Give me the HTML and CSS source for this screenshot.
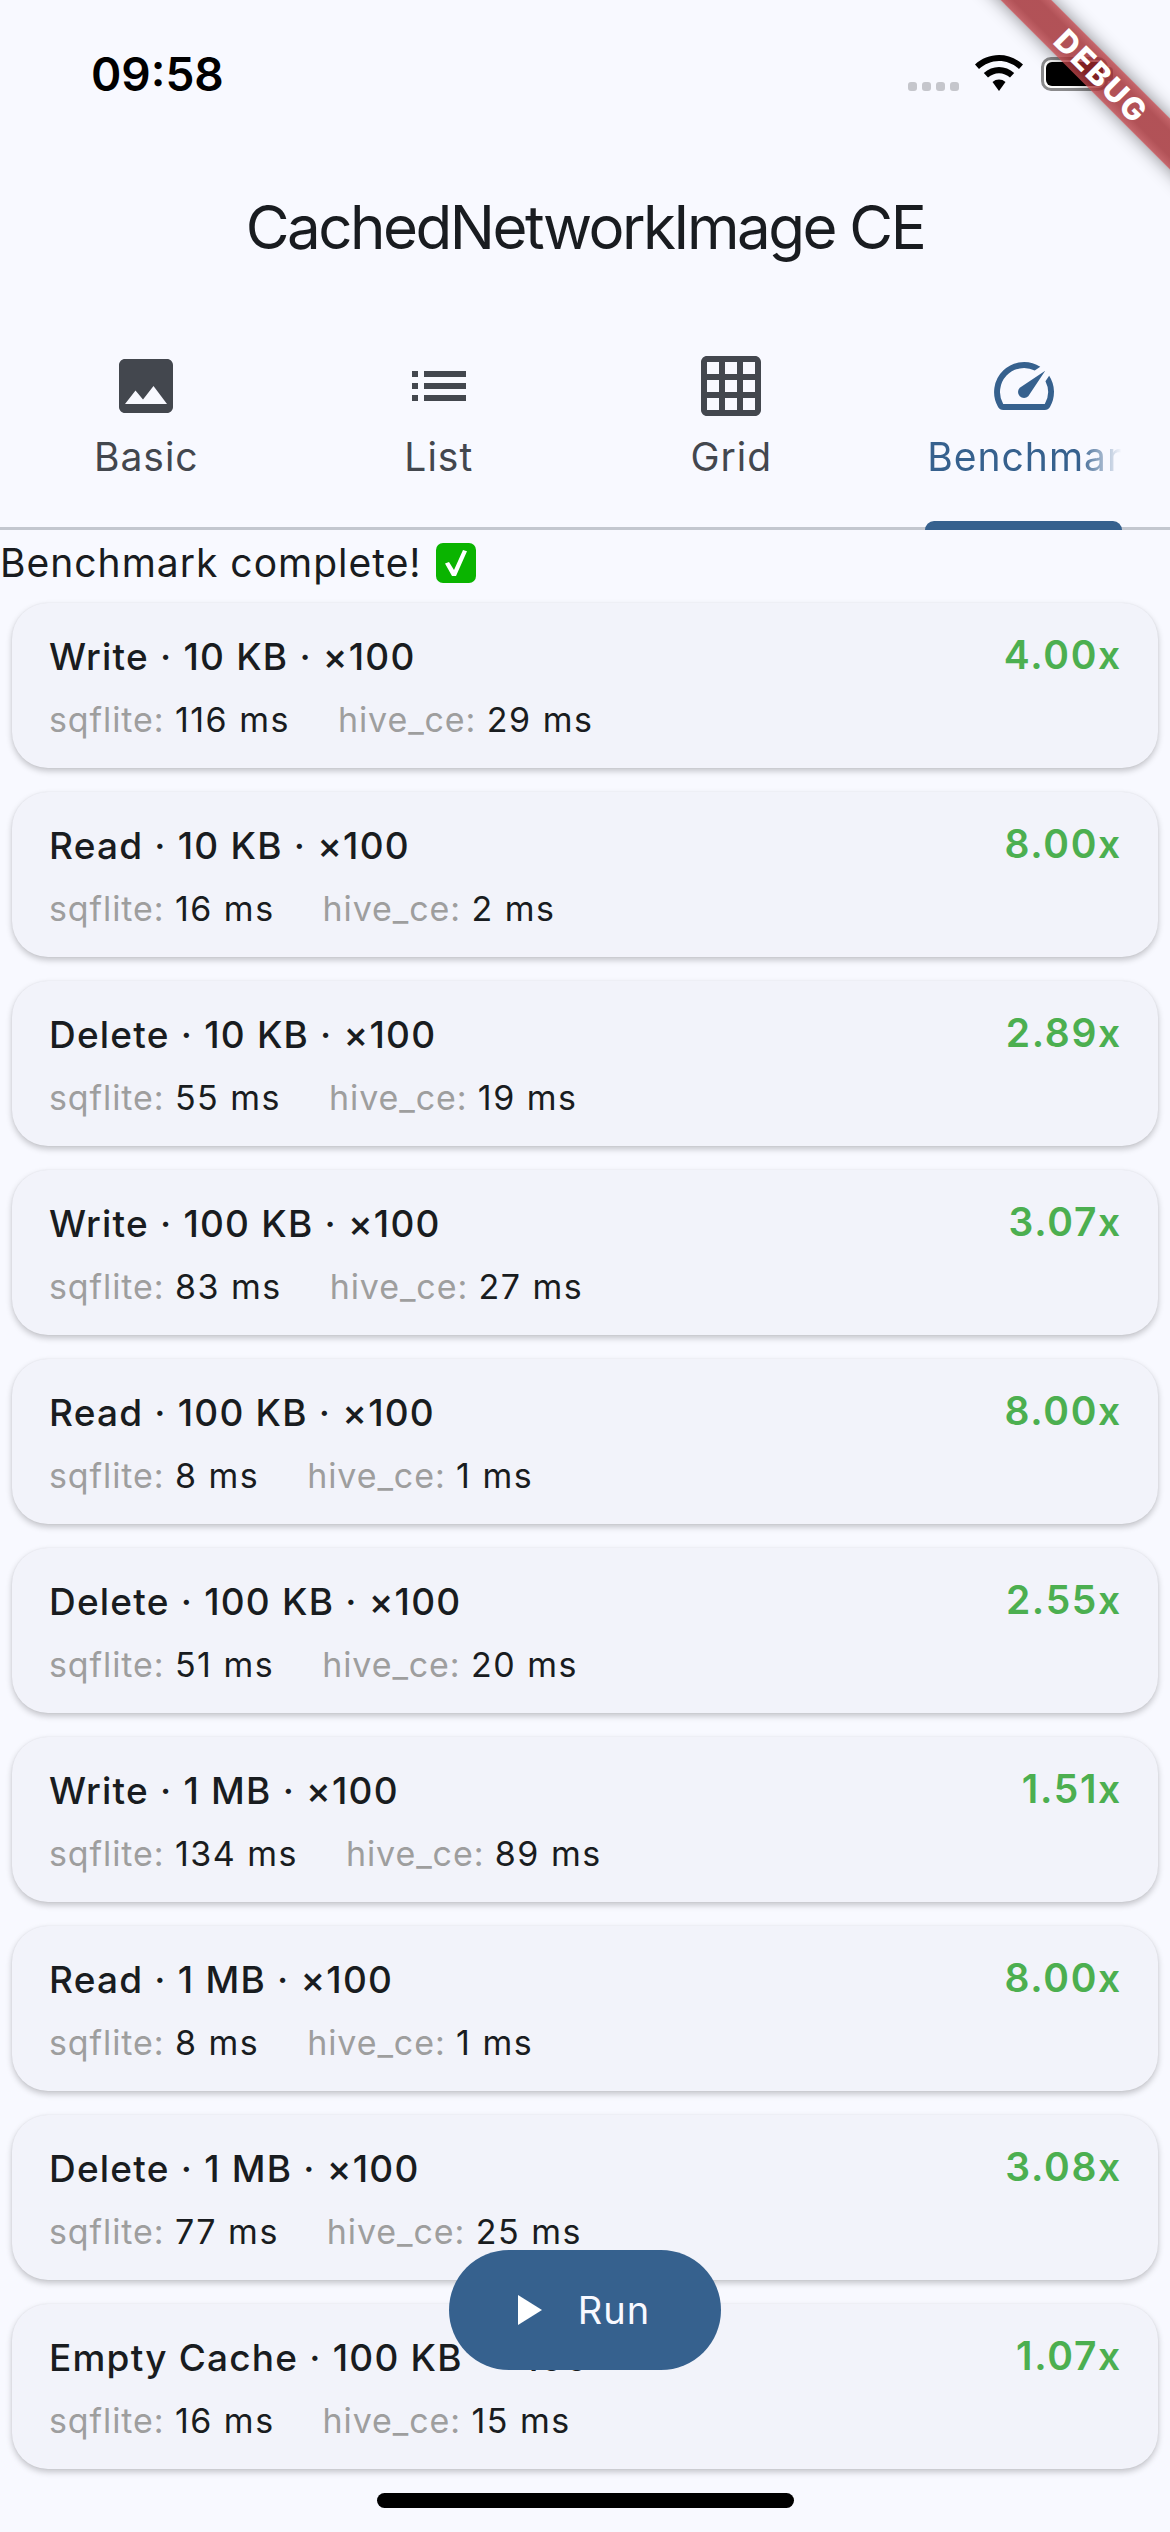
FILE: index.html
```html
<!DOCTYPE html>
<html lang="en">
<head>
<meta charset="utf-8">
<title>CachedNetworkImage CE</title>
<link rel="stylesheet" href="styles.css">
</head>
<body>
<div class="screen">
  <header class="status">
    <span class="time">09:58</span>
    <div class="status-icons">
      <div class="signal"><i></i><i></i><i></i><i></i></div>
      <svg class="wifi" viewBox="0 0 48 36"><path d="M24 0C15 0 6.500 3.500 0 9.500L4 14C9.500 9 16.500 6 24 6S38.500 9 44 14L48 9.500C41.500 3.500 33 0 24 0Z"/><path d="M24 12C18.500 12 13 14 8.800 18L13 22.500C16 20 20 18.200 24 18.200S32 20 35 22.500L39.200 18C35 14 29.500 12 24 12Z"/><path d="M24 24.500C21.500 24.500 19.500 25.300 17.500 27L24 36L30.500 27C28.500 25.300 26.500 24.500 24 24.500Z"/></svg>
      <div class="battery"><div class="battery-fill"></div></div>
    </div>
  </header>
  <h1 class="title">CachedNetworkImage CE</h1>
  <nav class="tabs">
    <div class="tab">
      <svg class="tab-icon" viewBox="0 0 24 24"><path d="M21 19V5c0-1.100-.9-2-2-2H5c-1.100 0-2 .9-2 2v14c0 1.100.9 2 2 2h14c1.100 0 2-.9 2-2zM8.500 13.500l2.500 3.010L14.500 12l4.500 6H5l3.500-4.500z"/></svg>
      <span class="tab-label">Basic</span>
    </div>
    <div class="tab">
      <svg class="tab-icon" viewBox="0 0 24 24"><path d="M3 13h2v-2H3v2zm0 4h2v-2H3v2zm0-8h2V7H3v2zm4 4h14v-2H7v2zm0 4h14v-2H7v2zM7 7v2h14V7H7z"/></svg>
      <span class="tab-label">List</span>
    </div>
    <div class="tab">
      <svg class="tab-icon" viewBox="0 0 24 24"><path d="M20 2H4c-1.100 0-2 .9-2 2v16c0 1.100.9 2 2 2h16c1.100 0 2-.9 2-2V4c0-1.100-.9-2-2-2zM8 20H4v-4h4v4zm0-6H4v-4h4v4zm0-6H4V4h4v4zm6 12h-4v-4h4v4zm0-6h-4v-4h4v4zm0-6h-4V4h4v4zm6 12h-4v-4h4v4zm0-6h-4v-4h4v4zm0-6h-4V4h4v4z"/></svg>
      <span class="tab-label">Grid</span>
    </div>
    <div class="tab tab-active">
      <svg class="tab-icon" viewBox="0 0 24 24"><path d="M20.380 8.570l-1.230 1.850a8 8 0 0 1-.22 7.580H5.070A8 8 0 0 1 15.580 6.850l1.850-1.230A10 10 0 0 0 3.350 19a2 2 0 0 0 1.720 1h13.850a2 2 0 0 0 1.740-1 10 10 0 0 0-.27-10.430zm-9.790 6.840a2 2 0 0 0 2.830 0l5.660-8.490-8.490 5.660a2 2 0 0 0 0 2.830z"/></svg>
      <span class="tab-label tab-clip"><span>Benchmark</span></span>
      <div class="tab-indicator"></div>
    </div>
  </nav>
  <p class="message">Benchmark complete! <svg class="emoji" viewBox="0 0 40 40"><rect width="40" height="40" rx="7" fill="#0ab400"/><path d="M9 20.500l4-1.500 5 8 9-20 4 1.200L20 33h-4z" fill="#fff"/></svg></p>
  <main class="cards">
    <article class="card"><div class="card-main"><div class="card-title">Write · 10 KB · ×100</div><div class="card-sub"><span><span class="k">sqflite: </span>116 ms</span><span><span class="k">hive_ce: </span>29 ms</span></div></div><span class="ratio">4.00x</span></article>
    <article class="card"><div class="card-main"><div class="card-title">Read · 10 KB · ×100</div><div class="card-sub"><span><span class="k">sqflite: </span>16 ms</span><span><span class="k">hive_ce: </span>2 ms</span></div></div><span class="ratio">8.00x</span></article>
    <article class="card"><div class="card-main"><div class="card-title">Delete · 10 KB · ×100</div><div class="card-sub"><span><span class="k">sqflite: </span>55 ms</span><span><span class="k">hive_ce: </span>19 ms</span></div></div><span class="ratio">2.89x</span></article>
    <article class="card"><div class="card-main"><div class="card-title">Write · 100 KB · ×100</div><div class="card-sub"><span><span class="k">sqflite: </span>83 ms</span><span><span class="k">hive_ce: </span>27 ms</span></div></div><span class="ratio">3.07x</span></article>
    <article class="card"><div class="card-main"><div class="card-title">Read · 100 KB · ×100</div><div class="card-sub"><span><span class="k">sqflite: </span>8 ms</span><span><span class="k">hive_ce: </span>1 ms</span></div></div><span class="ratio">8.00x</span></article>
    <article class="card"><div class="card-main"><div class="card-title">Delete · 100 KB · ×100</div><div class="card-sub"><span><span class="k">sqflite: </span>51 ms</span><span><span class="k">hive_ce: </span>20 ms</span></div></div><span class="ratio">2.55x</span></article>
    <article class="card"><div class="card-main"><div class="card-title">Write · 1 MB · ×100</div><div class="card-sub"><span><span class="k">sqflite: </span>134 ms</span><span><span class="k">hive_ce: </span>89 ms</span></div></div><span class="ratio">1.51x</span></article>
    <article class="card"><div class="card-main"><div class="card-title">Read · 1 MB · ×100</div><div class="card-sub"><span><span class="k">sqflite: </span>8 ms</span><span><span class="k">hive_ce: </span>1 ms</span></div></div><span class="ratio">8.00x</span></article>
    <article class="card"><div class="card-main"><div class="card-title">Delete · 1 MB · ×100</div><div class="card-sub"><span><span class="k">sqflite: </span>77 ms</span><span><span class="k">hive_ce: </span>25 ms</span></div></div><span class="ratio">3.08x</span></article>
    <article class="card"><div class="card-main"><div class="card-title">Empty Cache · 100 KB · ×100</div><div class="card-sub"><span><span class="k">sqflite: </span>16 ms</span><span><span class="k">hive_ce: </span>15 ms</span></div></div><span class="ratio">1.07x</span></article>
  </main>
  <button class="fab"><svg class="fab-icon" viewBox="0 0 24 30"><path d="M0 0L24 15L0 30Z"/></svg><span>Run</span></button>
  <div class="home-bar"></div>
  <div class="ribbon"><span>DEBUG</span></div>
</div>
</body>
</html>
```
FILE: styles.css
```css
* { box-sizing: border-box; }
html, body { margin: 0; padding: 0; }
body { background: #f8f9ff; font-family: Inter, "Noto Sans", sans-serif; color: #191c20; }
.screen { position: relative; width: 1170px; height: 2532px; overflow: hidden; background: #f8f9ff; }

.status { height: 141px; display: flex; justify-content: space-between; padding: 51px 62px 0 91px; }
.time { font-size: 46px; line-height: 46px; font-weight: 600; color: #000; }
.status-icons { display: flex; align-items: flex-start; padding-top: 4px; }
.signal { display: flex; gap: 5px; margin-top: 27px; margin-right: 16px; }
.signal i { width: 9px; height: 9px; border-radius: 3px; background: #c5c6cc; }
.wifi { width: 48px; height: 36px; fill: #000; margin-right: 18px; }
.battery { position: relative; width: 67px; height: 34px; margin-top: 2px; border: 3px solid #8a8a8c; border-radius: 10px; padding: 2px; background: #fff; }
.battery::after { content: ""; position: absolute; left: 64px; top: 7px; width: 5px; height: 14px; border-radius: 0 4px 4px 0; background: #8a8a8c; }
.battery-fill { width: 100%; height: 100%; background: #000; border-radius: 6px; }

.title { margin: 0; height: 168px; padding-top: 3px; display: flex; align-items: center; justify-content: center; font-size: 60px; line-height: 1; font-weight: 400; letter-spacing: -2.500px; color: #191c20; }

.tabs { display: grid; grid-template-columns: repeat(4, 1fr); height: 221px; padding-top: 41px; border-bottom: 3px solid #c3c7cf; }
.tab { position: relative; display: flex; flex-direction: column; align-items: center; color: #43474e; }
.tab-icon { width: 72px; height: 72px; fill: currentColor; flex: none; }
.tab-label { margin-top: 11px; font-size: 39px; line-height: 48px; font-weight: 400; letter-spacing: 1px; }
.tab-active { color: #36618e; }
.tab-clip { width: 197px; overflow: hidden; white-space: nowrap; padding-left: 2px; -webkit-mask-image: linear-gradient(to right, #000 78%, transparent 100%); mask-image: linear-gradient(to right, #000 78%, transparent 100%); }
.tab-indicator { position: absolute; left: 47px; right: 48px; bottom: -3px; height: 9px; background: #36618e; border-radius: 9px 9px 0 0; }

.message { margin: 0; height: 73px; padding-top: 9px; font-size: 39px; line-height: 48px; letter-spacing: 1px; white-space: nowrap; }
.emoji { width: 40px; height: 40px; margin-left: 2px; vertical-align: -6px; }

.cards { display: flex; flex-direction: column; gap: 24px; padding: 0 12px; }
.card { height: 165px; display: flex; justify-content: space-between; padding: 30px 36px 0 37px; background: #f2f3fa; border-radius: 36px; box-shadow: 0 3px 6px rgba(0, 0, 0, .22), 0 0 2px rgba(0, 0, 0, .06); }
.card-title { margin-top: 2px; font-size: 37px; line-height: 44px; font-weight: 500; letter-spacing: 1.200px; color: #191c20; }
.card-sub { display: flex; gap: 48px; margin-top: 20px; font-size: 34px; line-height: 42px; letter-spacing: 1.500px; color: #191c20; }
.k { color: #9e9e9e; letter-spacing: .9px; }
.ratio { font-size: 39px; line-height: 44px; font-weight: 600; letter-spacing: 1.700px; color: #4caf50; }

.fab { position: absolute; left: 449px; top: 2250px; width: 272px; height: 120px; display: flex; align-items: center; justify-content: center; gap: 36px; padding: 0 2px 0 0; border: 0; border-radius: 60px; background: #36618e; color: #f8f9ff; font-family: inherit; font-size: 38px; font-weight: 400; letter-spacing: 1px; }
.fab-icon { width: 24px; height: 30px; fill: #fff; }

.home-bar { position: absolute; left: 377px; top: 2493px; width: 417px; height: 15px; border-radius: 8px; background: #000; }

.ribbon { position: absolute; left: 899px; top: 55px; width: 400px; height: 36px; padding-left: 8px; transform: rotate(45deg); display: flex; align-items: center; justify-content: center; background: linear-gradient(to bottom, rgba(186, 70, 75, .82), rgba(160, 40, 45, .8) 25%, rgba(160, 40, 45, .8) 75%, rgba(186, 70, 75, .82)); box-shadow: 0 0 18px rgba(0, 0, 0, .45); color: #fff; font-size: 31px; line-height: 1; font-weight: 800; letter-spacing: 2px; }
```
